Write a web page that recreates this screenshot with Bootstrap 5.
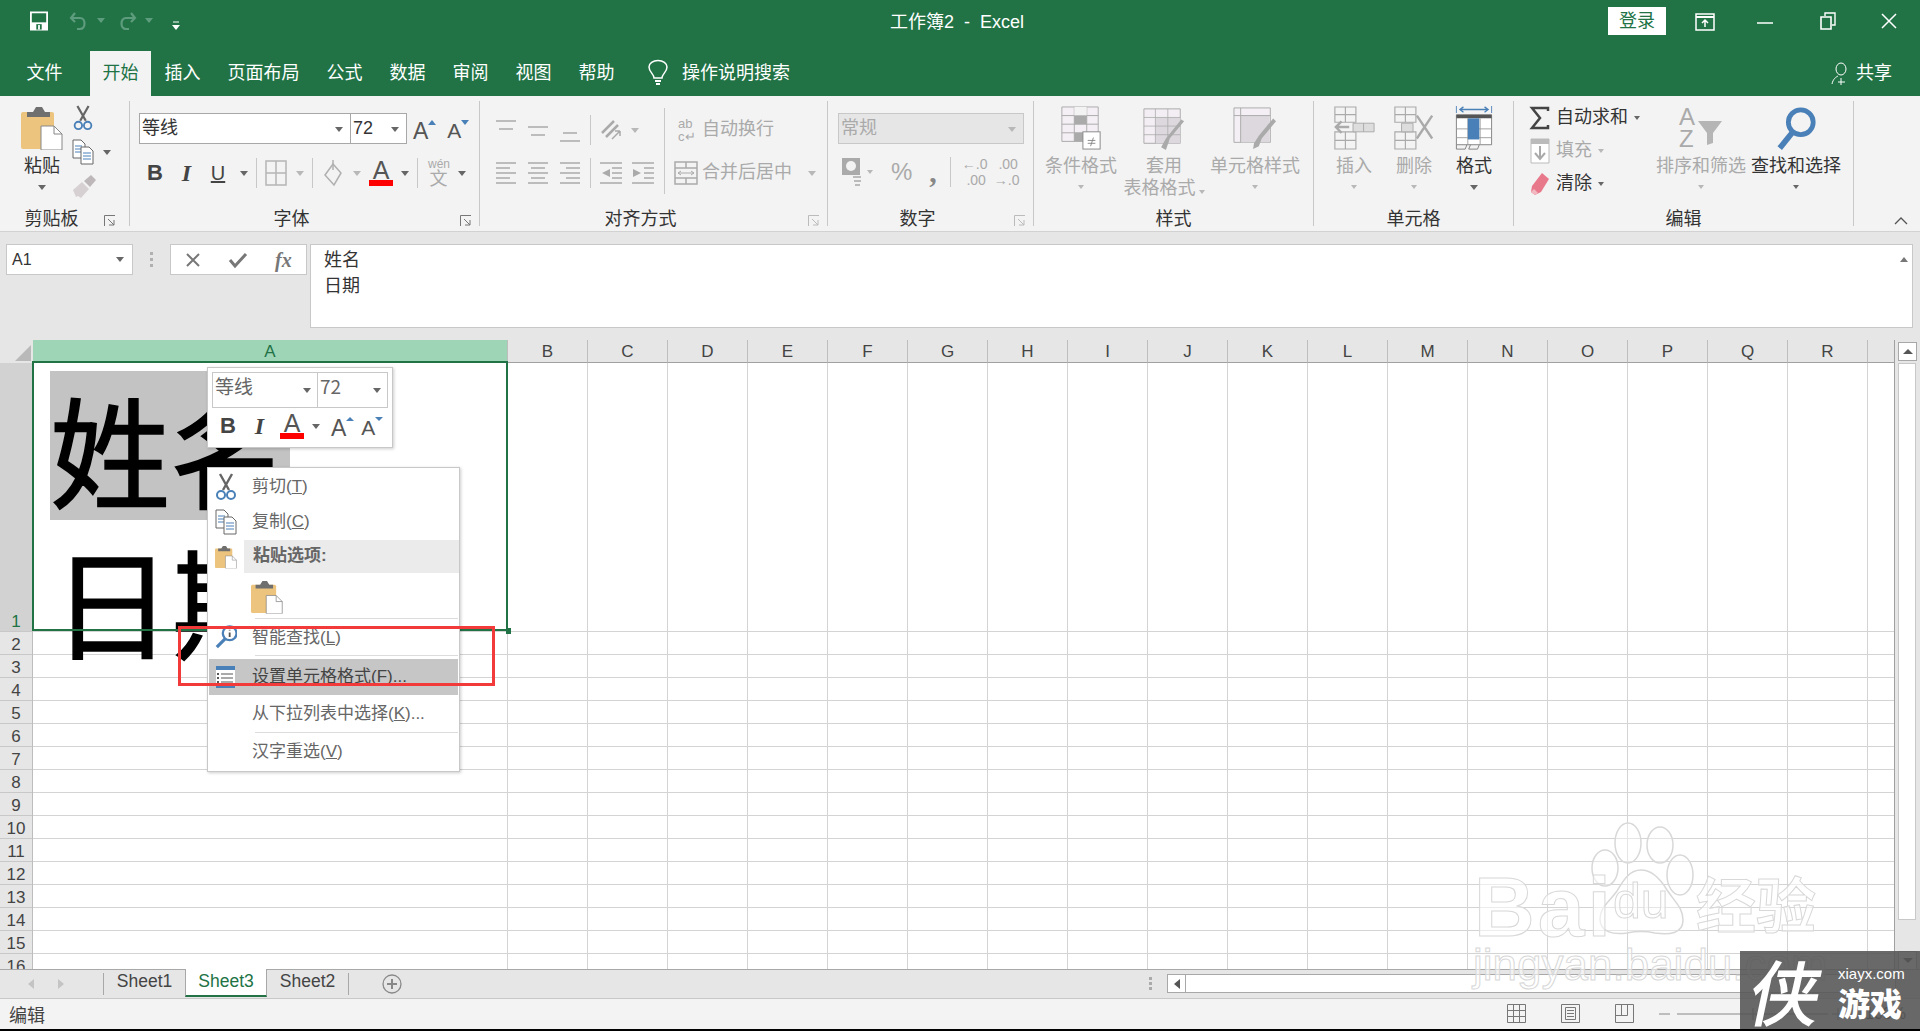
<!DOCTYPE html>
<html lang="zh">
<head>
<meta charset="utf-8">
<title>工作簿2 - Excel</title>
<link href="https://cdn.jsdelivr.net/npm/bootstrap@5.3.0/dist/css/bootstrap.min.css" rel="stylesheet">
<style>
html,body{height:100%;overflow:hidden}
body{font-family:"Liberation Sans","Noto Sans CJK SC",sans-serif;font-size:18px;color:#444;background:#000;line-height:1.2}
.xl-app{position:relative;width:1920px;height:1029px;overflow:hidden;background:#f3f3f3}
.ic{flex:none;display:block;overflow:visible}
.sl2{margin-left:2px}.sl3{margin-left:3px}.sl4{margin-left:4px}.sl5{margin-left:5px}.sl6{margin-left:6px}.sl7{margin-left:7px}.sl8{margin-left:8px}.sl9{margin-left:9px}.sl10{margin-left:10px}.sl11{margin-left:11px}.sl12{margin-left:12px}.sl13{margin-left:13px}.sl14{margin-left:14px}.sl16{margin-left:16px}.sl17{margin-left:17px}.sl18{margin-left:18px}.sl19{margin-left:19px}.sl21{margin-left:21px}.sl24{margin-left:24px}
.tri{flex:none;width:0;height:0;border-left:4px solid transparent;border-right:4px solid transparent;border-top:5px solid #666}
.tri.off{border-top-color:#b8b8b8}
.tri.sm{border-left-width:3px;border-right-width:3px;border-top-width:4px}
.tri.qt{border-top-color:#5d9c7d;margin-top:7px}
/* title */
.xl-title{height:51px;background:#217346;color:#fff;position:relative}
.xl-title .qat{padding-left:30px;padding-top:11px}
.qat-more{margin-top:10px}
.xl-doc{position:absolute;left:890px;top:11px;white-space:nowrap;line-height:22px}
.xl-login{width:58px;height:28px;margin-top:7px;background:#fff;color:#217346;font-size:18px;line-height:29px;text-align:center}
#rdo{margin:13px 0 0 29px}#wmin{margin:22px 0 0 42px}#wres{margin:12px 0 0 47px}#wcls{margin:13px 23px 0 45px}
.xl-tabs{height:45px;background:#217346;color:#fff;padding-left:13px}
.xl-tab{padding:0 13.5px;line-height:45px;height:45px}
.xl-tab.on{background:#f3f3f3;color:#217346;margin-left:14px;padding:0 12.5px}
.xl-tell{margin-left:20px}
#shr{margin-right:28px}
/* ribbon */
.xl-ribbon{height:136px;padding-top:5px;background:#f3f3f3;border-bottom:1px solid #d2d2d2;position:relative}
.rg{height:125px;flex:none;border-right:1px solid #c8c8c8;display:flex;flex-direction:column}
.rg-a{width:130px}.rg-b{width:350px}.rg-c{width:348px}.rg-d{width:206px}.rg-e{width:280px}.rg-f{width:200px}.rg-g{width:340px}
.rg-body{height:105px;flex:none;display:flex}
.rg-label{height:20px;display:flex;color:#333;line-height:26px;font-size:18px}
.rg-name{flex:1 1 auto;text-align:center}
.rg-name.lnch{padding-right:26px}
.launch{position:relative}
.launcher{flex:none;width:12px;height:12px;margin:9px 7px 0 0;position:absolute;right:0}
.rg-a .launcher{right:6px}
.bigb{flex:none;display:flex;flex-direction:column;align-items:center;color:#333;white-space:nowrap;line-height:22px;padding-top:5px}
.bigb .ic{height:44px}
.bigb.off{color:#aaa}
.bigb .lbl{margin-top:5px;height:22px}
.bigb .tri{margin-top:8px}
.bigb .two{margin-top:1px;display:flex;align-items:center;gap:3px;height:20px}
.w42{width:42px}.w78{width:78px}.w88{width:88px}.w94{width:94px}.w60{width:60px}.w90{width:90px}
.cb-small{padding-top:4px;display:flex;flex-direction:column;gap:8px}
.combo{display:flex;align-items:center;height:31px;background:#fff;border:1px solid #a8a8a8;position:relative;padding-left:2px;color:#333;flex:none}
.combo .tri{position:absolute;right:7px;top:13px}
.c-font{width:212px}.c-size{width:57px;margin-left:-1px}
.row1{margin-top:12px;align-items:center;height:31px}
.row2{margin-top:14px;align-items:center;height:30px}
.fmt{flex:none;text-align:center;color:#444;line-height:26px}
.fb{width:15px;font-weight:700;font-size:22px}.fi{width:13px;font-style:italic;font-family:"Liberation Serif",serif;font-size:24px;font-weight:700}.fu{width:16px;font-size:20px;text-decoration:underline}
.vsep{flex:none;width:1px;height:30px;background:#c8c8c8}
.vsep.tall{height:86px;margin-top:7px}
.aa{font-size:23px;line-height:32px;padding-top:4px;color:#555;flex:none}
.aa2{font-size:21px;line-height:32px;padding-top:4px;color:#555;flex:none}
.fc{flex:none;width:24px;display:flex;flex-direction:column;align-items:center;color:#555}
.fc b{font-weight:400;font-size:25px;line-height:20px;height:20px}
.fc i{display:block;width:24px;height:6px;background:#f00}
.off-t{color:#aaa;white-space:nowrap}
.wen{flex:none;width:21px;text-align:center;color:#aaa;font-size:12px;line-height:12px}
.wen span{display:block;font-size:18px;line-height:18px}
.al1{margin-top:14px;height:30px;align-items:center}
.al2{margin-top:13px;height:30px;align-items:center}
#alL{width:184px}
.ab{flex:none;width:18px;color:#aaa;font-size:13px;line-height:13px}
.c-num{width:186px;margin-left:10px;background:#e6e6e6;border-color:#c8c8c8;color:#aaa}
.nrow{margin-top:14px;height:28px;align-items:center}
.pct{flex:none;font-size:24px;color:#aaa}
.cmm{flex:none;font-size:30px;font-weight:700;color:#888;line-height:20px;font-family:"Liberation Serif",serif}
.dec{flex:none;font-size:14px;line-height:16px;color:#aaa;width:24px;text-align:right}
.ed-left{width:126px;flex:none;margin-left:16px;display:flex;flex-direction:column}
.ed-row{display:flex;align-items:center;height:33px;white-space:nowrap;color:#333}
.ed-row.off{color:#aaa}
.ed-row span{margin-left:6px}
.az{color:#aaa;font-size:24px;line-height:22px;width:18px}
.sort-ic{display:flex;height:44px;align-items:flex-start}
.collapse-arrow{position:absolute;left:1894px;top:120px}
/* formula */
.xl-formula{height:108px;background:#e6e6e6;padding-top:12px;display:flex;align-items:flex-start;flex:none}
.namebox{width:127px;height:31px;margin-left:6px;background:#fff;border:1px solid #c8c8c8;display:flex;align-items:center;justify-content:space-between;padding:0 8px 0 5px;font-size:16px;color:#333}
.dots{margin-left:17px;width:4px;height:31px;display:flex;flex-direction:column;gap:3px;justify-content:center}
.dots i{display:block;width:3px;height:3px;background:#b0b0b0}
.fxbox{width:137px;height:31px;margin-left:16px;background:#fff;border:1px solid #c8c8c8;display:flex;align-items:center;padding-left:14px;gap:28px}
.fxtxt{font-family:"Liberation Serif",serif;font-style:italic;font-weight:700;font-size:20px;color:#777;line-height:20px}
.finput{width:1603px;height:84px;margin-left:3px;background:#fff;border:1px solid #c8c8c8;padding:2px 13px;line-height:26px;color:#333;position:relative}
.finput .tri-up{position:absolute;right:4px;top:12px;width:0;height:0;border-left:4px solid transparent;border-right:4px solid transparent;border-bottom:5px solid #777}
/* grid */
.colhead{height:23px;display:flex;background:#e6e6e6;flex:none;position:relative}
.corner{width:33px;flex:none;position:relative}
.corner svg{position:absolute;left:15px;top:5px}
.ch{width:80px;flex:none;text-align:center;font-size:17px;line-height:24px;border-right:1px solid #bdbdbd;color:#444;border-bottom:1px solid #a0a0a0}
.ch.a{width:475px;background:#9fd5b7;color:#217346;border-bottom:0}
.ch-rest{width:27px;flex:none;border-bottom:1px solid #a0a0a0;border-right:1px solid #a0a0a0}
.ch-end{flex:1 1 auto;padding:2px 0 0 3px}
.gridwrap{height:606px;display:flex;overflow:hidden;background:#fff;flex:none}
.rowheads{width:33px;flex:none;background:#e6e6e6;border-right:1px solid #bdbdbd}
.rh{height:23px;text-align:center;font-size:17px;line-height:25px;border-bottom:1px solid #c8c8c8;color:#444}
.rh.one{height:269px;background:#d2d2d2;color:#217346;display:flex;align-items:flex-end;justify-content:center;line-height:18px}
.col-a{width:475px;flex:none;border-right:1px solid #d4d4d4;display:flex;flex-direction:column}
.col-r{width:1387px;flex:none;display:flex;flex-direction:column;background-image:linear-gradient(90deg,transparent 79px,#d4d4d4 79px);background-size:80px 100%;border-right:1px solid #a0a0a0}
.r1{height:268px;flex:none}
.rn{flex:1 1 auto;background-image:linear-gradient(180deg,#d4d4d4 1px,transparent 1px);background-size:100% 23px}
.vscroll{flex:1 1 auto;background:#e6e6e6;display:flex;flex-direction:column;padding-left:3px}
.vs-btn{height:19px;width:19px;background:#fff;border:1px solid #a8a8a8;flex:none;display:flex;align-items:center;justify-content:center}
.vs-thumb{height:557px;width:18px;background:#fff;border:1px solid #c8c8c8;flex:none}
.vs-gap{height:31px;flex:none}
.tri-up2{width:0;height:0;border-left:5px solid transparent;border-right:5px solid transparent;border-bottom:5px solid #555}
.tri-dn2{width:0;height:0;border-left:5px solid transparent;border-right:5px solid transparent;border-top:5px solid #555}
/* sheets */
.sheetbar{height:30px;background:#e6e6e6;border-top:1px solid #a8a8a8;border-bottom:1px solid #c8c8c8;display:flex;flex:none;position:relative}
.navarr{padding-left:28px;height:28px;align-items:center;width:103px;flex:none}
.stab{width:81px;height:27px;text-align:center;font-size:17.5px;line-height:22px;color:#444;flex:none}
.stab.cur{background:#fff;color:#217346;border-bottom:2px solid #217346;border-left:1px solid #a8a8a8;border-right:1px solid #a8a8a8;margin-top:-1px;height:28px;padding-top:1px;width:82px}
.shsep{width:1px;height:22px;margin-top:3px;background:#a8a8a8;flex:none}
.addsheet{margin-left:33px;margin-top:4px}
.sbtrack{position:absolute;left:1167px;top:4px;width:729px;height:19px;display:flex;align-items:stretch}
.sb-l{width:19px;background:#fff;border:1px solid #a8a8a8;display:flex;align-items:center;justify-content:center;flex:none}
.sb-th{flex:1 1 auto;background:#fff;border:1px solid #a8a8a8;border-left:0}
.tdots{position:absolute;left:1149px;top:7px;width:3px;display:flex;flex-direction:column;gap:2px}
.tdots i{display:block;width:3px;height:3px;background:#aaa}
.statusbar{height:30px;background:#f3f3f3;padding-left:9px;padding-top:3px;line-height:24px;color:#444;display:flex;align-items:center;flex:none;position:relative}
.vw{position:absolute;top:5px}
.v1{left:1507px}.v2{left:1561px}.v3{left:1615px}.v4{left:1659px;top:5px}
.pct100{position:absolute;left:1865px;top:3px;font-size:16px}
/* overlays */
.sel-box{position:absolute;left:32px;top:361px;width:476px;height:270px;border:2px solid #217346;pointer-events:none}
.sel-h{position:absolute;left:506px;top:628px;width:5px;height:6px;background:#217346}
.bigtxt{position:absolute;left:50px;top:371px;font-family:"Noto Sans CJK SC",sans-serif;font-size:120px;color:#000;white-space:nowrap;-webkit-text-stroke:1.5px #000}
.bigtxt .hl{display:block;width:240px;height:149px;line-height:155px;background:#c3c3c3}
.bigtxt .l2{display:block;height:149px;line-height:159px;padding-left:2px}
.minibar{position:absolute;left:207px;top:367px;width:186px;height:81px;background:#fff;border:1px solid #c8c8c8;box-shadow:1px 1px 3px rgba(0,0,0,.2);padding:4px}
.mb-top{display:flex;height:36px}
.mb-f{width:106px;height:36px;border:1px solid #c8c8c8;display:flex;align-items:center;padding-left:2px;padding-bottom:8px;position:relative;font-size:19px;color:#666;font-family:"Noto Sans CJK SC",sans-serif}
.mb-s{width:71px;margin-left:-1px}
.mb-f .tri{position:absolute;right:6px;top:15px}
.mb-row{height:36px;align-items:center;color:#555}
.ctx{position:absolute;left:207px;top:467px;width:253px;height:305px;background:#fff;border:1px solid #c8c8c8;box-shadow:1px 1px 3px rgba(0,0,0,.2);padding-top:2px;color:#666;font-size:17px}
.ci{display:flex;align-items:center;padding-left:7px;white-space:nowrap}
.ci .ii{flex:none;width:22px}
.ci .tt{margin-left:15px}
.h34{height:34px}.h36{height:36px}
.ci.low .tt{padding-top:3px}
.ci u{text-decoration:underline}
.ci.hdr{height:33px}
.ci.hdr b{display:flex;align-items:center;height:33px;width:215px;background:#ebebeb;padding-left:9px;color:#666}
.ci.hov{margin:3px 1px 1px;padding-left:6px;background:#c6c6c6;color:#444;height:36px}
.csep{height:1px;background:#dcdcdc;margin:0 1px 0 47px}
.pasterow{height:45px;padding:7px 0 0 43px}
.redbox{position:absolute;left:178px;top:626px;width:317px;height:60px;border:3px solid #f33a3a;pointer-events:none}
.bd-logo{position:absolute;left:1470px;top:822px;width:350px;height:175px;pointer-events:none}
.bd-t{position:absolute;font-family:"Liberation Sans",sans-serif;font-weight:700;color:rgba(255,255,255,.55);-webkit-text-stroke:1px #d8d8d8;white-space:nowrap;line-height:1}
.bd-bai{left:4px;top:43px;font-size:84px;letter-spacing:3px}
.bd-du{left:143px;top:54px;font-size:50px;font-weight:400}
.bd-jy{left:226px;top:50px;font-size:60px;font-family:"Noto Sans CJK SC",sans-serif}
.bd-url{left:3px;top:121px;font-size:44px;font-weight:400}
.xia{position:absolute;left:1740px;top:951px;width:180px;height:80px;background:rgba(84,84,84,.88);color:#fff;overflow:hidden}
.xia-b{position:absolute;left:12px;top:2px;font-family:"Noto Sans CJK SC",sans-serif;font-weight:400;-webkit-text-stroke:1.5px #fff;font-size:70px;line-height:74px;transform:skewX(-12deg)}
.xia-u{position:absolute;left:98px;top:15px;font-size:15px;line-height:16px}
.xia-g{position:absolute;left:98px;top:33px;font-family:"Noto Sans CJK SC",sans-serif;font-weight:900;font-size:32px;line-height:36px;white-space:nowrap}
</style>
</head>
<body>
<svg width="0" height="0" class="position-absolute">
<defs>
<symbol id="paste" viewBox="0 0 42 44"><rect x="0" y="6" width="33" height="37" rx="2" fill="#edc47d"/><path d="M6 6h6l3-5h6l3 5h5v5H6z" fill="#6f6f6f"/><path d="M20 20h13l8 8v16H20z" fill="#fff" stroke="#888"/><path d="M33 20v8h8" fill="none" stroke="#888"/></symbol>
<symbol id="sciss" viewBox="0 0 22 28"><path d="M5 1l9 16M17 1L8 17" stroke="#666" stroke-width="2.4" fill="none"/><circle cx="6" cy="22" r="4" fill="none" stroke="#4a80b8" stroke-width="2"/><circle cx="16" cy="22" r="4" fill="none" stroke="#4a80b8" stroke-width="2"/></symbol>
<symbol id="copy" viewBox="0 0 22 26"><path d="M1 1h8l4 4v14H1z" fill="#fff" stroke="#666"/><path d="M3 7h7M3 10h7M3 13h7" stroke="#4a80b8"/><path d="M9 8h8l4 4v13H9z" fill="#fff" stroke="#666"/><path d="M11 14h8M11 17h8M11 20h8" stroke="#4a80b8"/></symbol>
<symbol id="brush" viewBox="0 0 26 26"><path d="M1 17l9-8 7 7-8 9-3-2-2 1z" fill="#d6d0d2"/><path d="M12 8l7-6 5 5-6 7z" fill="#bdb7b9"/></symbol>
</defs>
</svg>
<div class="xl-app d-flex flex-column">

<!-- title bar -->
<div class="xl-title d-flex flex-none">
  <div class="qat d-flex align-items-start">
    <svg class="ic" width="18" height="20" viewBox="0 0 20 21"><path d="M1 1h18v19H1z" fill="none" stroke="#fff" stroke-width="2"/><rect x="1" y="12" width="18" height="8" fill="#fff"/><rect x="7" y="14" width="6" height="6" fill="#217346"/><rect x="9" y="15" width="2" height="5" fill="#fff"/></svg>
    <svg class="ic sl19" width="22" height="21" viewBox="0 0 18 21"><path d="M6 2L2 7l4 4M2 7h9c6 0 6 11 0 11H8" fill="none" stroke="#5d9c7d" stroke-width="2.2"/></svg>
    <span class="tri qt sl8"></span>
    <svg class="ic sl12" width="22" height="21" viewBox="0 0 18 21"><path d="M12 2l4 5-4 4M16 7H7c-6 0-6 11 0 11h3" fill="none" stroke="#5d9c7d" stroke-width="2.2"/></svg>
    <span class="tri qt sl6"></span>
    <svg class="ic sl19 qat-more" width="8" height="9" viewBox="0 0 8 9"><path d="M1 1h6" stroke="#fff"/><path d="M0 4h8L4 9z" fill="#fff"/></svg>
  </div>
  <div class="xl-doc">工作簿2&nbsp; -&nbsp; Excel</div>
  <div class="ms-auto d-flex align-items-start">
    <div class="xl-login">登录</div>
    <svg class="ic" width="20" height="18" viewBox="0 0 20 18" id="rdo"><path d="M1 1h18v16H1z" fill="none" stroke="#fff" stroke-width="1.5"/><path d="M1 4h18" stroke="#fff" stroke-width="2"/><path d="M10 14V7M7 10l3-3 3 3" fill="none" stroke="#fff" stroke-width="1.5"/></svg>
    <svg class="ic" width="16" height="2" viewBox="0 0 16 2" id="wmin"><path d="M0 1h16" stroke="#fff" stroke-width="1.5"/></svg>
    <svg class="ic" width="16" height="18" viewBox="0 0 16 18" id="wres"><path d="M1 5h10v12H1z" fill="none" stroke="#fff" stroke-width="1.6"/><path d="M5 4V1h10v12h-3" fill="none" stroke="#fff" stroke-width="1.4"/></svg>
    <svg class="ic" width="16" height="16" viewBox="0 0 16 16" id="wcls"><path d="M1 1l14 14M15 1L1 15" stroke="#fff" stroke-width="1.5"/></svg>
  </div>
</div>
<div class="xl-tabs d-flex align-items-stretch flex-none">
  <div class="xl-tab">文件</div>
  <div class="xl-tab on">开始</div>
  <div class="xl-tab">插入</div>
  <div class="xl-tab">页面布局</div>
  <div class="xl-tab">公式</div>
  <div class="xl-tab">数据</div>
  <div class="xl-tab">审阅</div>
  <div class="xl-tab">视图</div>
  <div class="xl-tab">帮助</div>
  <div class="xl-tell d-flex align-items-center">
    <svg class="ic" width="20" height="27" viewBox="0 0 20 27"><path d="M6 18c0-4-5-6-5-11a9 6.500 0 0 1 18 0c0 5-5 7-5 11z" fill="none" stroke="#fff" stroke-width="1.5"/><path d="M7 21h6M8 24h4" stroke="#fff" stroke-width="2"/></svg>
    <span class="sl14">操作说明搜索</span>
  </div>
  <div class="ms-auto d-flex align-items-center" id="shr">
    <svg class="ic" width="20" height="24" viewBox="0 0 20 24"><ellipse cx="10" cy="7" rx="5" ry="6" fill="none" stroke="#fff"/><path d="M1 22c1-5 4-7 6-8M10 23v-7M7 20h7" fill="none" stroke="#fff"/></svg>
    <span class="sl5">共享</span>
  </div>
</div>

<!-- ribbon -->
<div class="xl-ribbon d-flex flex-none">
  <div class="rg rg-a">
    <div class="rg-body">
      <div class="bigb w42 sl21"><svg class="ic" width="42" height="44"><use href="#paste"/></svg><span class="lbl">粘贴</span><span class="tri"></span></div>
      <div class="cb-small sl9">
        <svg class="ic" width="22" height="26"><use href="#sciss"/></svg>
        <div class="d-flex align-items-center"><svg class="ic" width="22" height="26"><use href="#copy"/></svg><span class="tri sl9"></span></div>
        <svg class="ic" width="26" height="26"><use href="#brush"/></svg>
      </div>
    </div>
    <div class="rg-label launch"><span class="rg-name lnch">剪贴板</span><svg class="launcher" viewBox="0 0 12 12"><path d="M.5 11V.5H11M4 4l6 6M10 5v5H5" fill="none" stroke="#777"/></svg></div>
  </div>

  <div class="rg rg-b">
    <div class="rg-body d-block">
      <div class="d-flex row1 sl9">
        <div class="combo c-font">等线<span class="tri"></span></div>
        <div class="combo c-size">72<span class="tri"></span></div>
        <span class="aa sl6">A</span>
        <svg class="ic" width="8" height="20" viewBox="0 0 8 20"><path d="M0 6l4-5 4 5z" fill="#4a80b8"/></svg>
        <span class="aa2 sl11">A</span>
        <svg class="ic" width="8" height="20" viewBox="0 0 8 20"><path d="M0 1l4 5 4-5z" fill="#4a80b8"/></svg>
      </div>
      <div class="d-flex row2">
        <span class="fmt fb sl17">B</span>
        <span class="fmt fi sl18">I</span>
        <span class="fmt fu sl17">U</span>
        <span class="tri sl14"></span>
        <span class="vsep sl8"></span>
        <svg class="ic sl8" width="22" height="26" viewBox="0 0 22 26"><path d="M1 1h20v24H1zM11 1v24M1 13h20" fill="none" stroke="#b5b5b5" stroke-width="1.5"/></svg>
        <span class="tri off sl9"></span>
        <span class="vsep sl8"></span>
        <svg class="ic sl10" width="22" height="28" viewBox="0 0 22 28"><path d="M10 5L2 16l9 10 7-12z" fill="none" stroke="#b0b0b0" stroke-width="1.5"/><path d="M10 1v10" stroke="#b0b0b0" stroke-width="1.500"/></svg>
        <span class="tri off sl8"></span>
        <div class="fc sl8"><b>A</b><i></i></div>
        <span class="tri sl8"></span>
        <span class="vsep sl8"></span>
        <div class="wen sl10">wén<span>文</span></div>
        <span class="tri sl9"></span>
      </div>
    </div>
    <div class="rg-label launch"><span class="rg-name lnch">字体</span><svg class="launcher" viewBox="0 0 12 12"><path d="M.5 11V.5H11M4 4l6 6M10 5v5H5" fill="none" stroke="#777"/></svg></div>
  </div>

  <div class="rg rg-c">
    <div class="rg-body">
      <div class="flex-none" id="alL">
        <div class="d-flex al1">
          <svg class="ic sl16" width="20" height="24" viewBox="0 0 20 24"><path d="M0 3h20M3 11h14" stroke="#aaa" stroke-width="1.5"/></svg>
          <svg class="ic sl12" width="20" height="24" viewBox="0 0 20 24"><path d="M0 9h20M3 17h14" stroke="#aaa" stroke-width="1.5"/></svg>
          <svg class="ic sl12" width="20" height="24" viewBox="0 0 20 24"><path d="M3 15h14M0 23h20" stroke="#aaa" stroke-width="1.5"/></svg>
          <span class="vsep sl10"></span>
          <svg class="ic sl9" width="22" height="26" viewBox="0 0 22 26"><path d="M2 16L14 4M6 20L18 8" stroke="#aaa" stroke-width="2.500"/><path d="M12 22l8-8m0 0h-5m5 0v5" stroke="#aaa" fill="none" stroke-width="1.500"/></svg>
          <span class="tri off sl9"></span>
        </div>
        <div class="d-flex al2">
          <svg class="ic sl16" width="20" height="24" viewBox="0 0 20 24"><path d="M0 2h20M0 7h14M0 12h20M0 17h14M0 22h20" stroke="#aaa" stroke-width="1.500"/></svg>
          <svg class="ic sl12" width="20" height="24" viewBox="0 0 20 24"><path d="M0 2h20M3 7h14M0 12h20M3 17h14M0 22h20" stroke="#aaa" stroke-width="1.500"/></svg>
          <svg class="ic sl12" width="20" height="24" viewBox="0 0 20 24"><path d="M0 2h20M6 7h14M0 12h20M6 17h14M0 22h20" stroke="#aaa" stroke-width="1.500"/></svg>
          <span class="vsep sl10"></span>
          <svg class="ic sl9" width="22" height="24" viewBox="0 0 22 24"><path d="M0 2h22M12 7h10M12 12h10M12 17h10M0 22h22" stroke="#aaa" stroke-width="1.500"/><path d="M10 8v8L2 12z" fill="#aaa"/></svg>
          <svg class="ic sl10" width="22" height="24" viewBox="0 0 22 24"><path d="M0 2h22M12 7h10M12 12h10M12 17h10M0 22h22" stroke="#aaa" stroke-width="1.500"/><path d="M1 8v8l8-4z" fill="#aaa"/></svg>
        </div>
      </div>
      <span class="vsep tall"></span>
      <div class="flex-none">
        <div class="d-flex al1">
          <div class="ab sl13">ab<br>c↵</div>
          <span class="off-t sl6">自动换行</span>
        </div>
        <div class="d-flex al2">
          <svg class="ic sl9" width="24" height="24" viewBox="0 0 24 24"><path d="M1 1h22v22H1zM1 7h22M1 17h22M12 1v6M12 17v6" fill="none" stroke="#aaa" stroke-width="1.500"/><path d="M4 12h16M7 10l-3 2 3 2M17 10l3 2-3 2" fill="none" stroke="#aaa"/></svg>
          <span class="off-t sl4">合并后居中</span>
          <span class="tri off sl16"></span>
        </div>
      </div>
    </div>
    <div class="rg-label launch"><span class="rg-name lnch">对齐方式</span><svg class="launcher" viewBox="0 0 12 12"><path d="M.5 11V.5H11M4 4l6 6M10 5v5H5" fill="none" stroke="#bbb"/></svg></div>
  </div>

  <div class="rg rg-d">
    <div class="rg-body d-block">
      <div class="d-flex row1">
        <div class="combo c-num">常规<span class="tri off"></span></div>
      </div>
      <div class="d-flex nrow">
        <svg class="ic sl13" width="22" height="30" viewBox="0 0 22 30"><rect x="1" y="1" width="18" height="17" fill="#aaa"/><circle cx="10" cy="9" r="5" fill="#f3f3f3"/><path d="M12 20h8M13 24h7M14 28h5" stroke="#bbb" stroke-width="2"/></svg>
        <span class="tri off sm sl4"></span>
        <span class="pct sl18">%</span>
        <span class="cmm sl17">,</span>
        <span class="vsep sl13"></span>
        <div class="dec sl11">←.0<br>.00</div>
        <div class="dec sl8">.00<br>→.0</div>
      </div>
    </div>
    <div class="rg-label launch"><span class="rg-name lnch">数字</span><svg class="launcher" viewBox="0 0 12 12"><path d="M.5 11V.5H11M4 4l6 6M10 5v5H5" fill="none" stroke="#bbb"/></svg></div>
  </div>

  <div class="rg rg-e">
    <div class="rg-body">
      <div class="bigb off w78 sl8">
        <svg class="ic" width="42" height="46" viewBox="0 0 42 46"><path d="M1 1h38v36H1z" fill="#f4eff4" stroke="#aaa"/><path d="M14 1v36M27 1v36M1 10h38M1 19h38M1 28h38" stroke="#aaa"/><path d="M14 1h13v9H14z" fill="#f3f3f3"/><path d="M14 10h13v9H14zM14 28h13v9H14z" fill="#aaa"/><rect x="23" y="27" width="18" height="18" fill="#fff" stroke="#888"/><path d="M28 36h8M28 39h8M31 42l3-9" stroke="#888"/></svg>
        <span class="lbl">条件格式</span><span class="tri off sm"></span>
      </div>
      <div class="bigb off w88">
        <svg class="ic" width="44" height="46" viewBox="0 0 44 46"><path d="M1 3h38v36H1z" fill="#f3eef3" stroke="#aaa"/><path d="M13 12h26v27H13z" fill="#ddd8dd"/><path d="M13 3v36M26 3v36M1 12h38M1 21h38M1 30h38" stroke="#aaa" stroke-width=".8"/><path d="M43 16L28 34l-3 9-1 3-5-3 5-9 16-20z" fill="#aaa"/></svg>
        <span class="lbl">套用</span>
        <span class="two">表格格式<span class="tri off sm"></span></span>
      </div>
      <div class="bigb off w94">
        <svg class="ic" width="46" height="46" viewBox="0 0 46 46"><path d="M1 2h38v36H1z" fill="#f4eff4" stroke="#aaa"/><path d="M8 10h30v28H8z" fill="#ddd8dd"/><path d="M1 10h38M8 2v36" stroke="#aaa"/><path d="M45 16L30 34l-3 8-6 3 1-6 5-8 15-18z" fill="#aaa"/></svg>
        <span class="lbl">单元格样式</span><span class="tri off sm"></span>
      </div>
    </div>
    <div class="rg-label"><span class="rg-name">样式</span></div>
  </div>

  <div class="rg rg-f">
    <div class="rg-body">
      <div class="bigb off w60 sl10">
        <svg class="ic" width="42" height="46" viewBox="0 0 42 46"><path d="M1 1h22v16H1zM1 27h22v18H1zM12 1v16M1 9h22M12 27v18M1 36h22" fill="none" stroke="#aaa" stroke-width="1.200"/><path d="M20 18H42v9H20z" fill="#ddd" stroke="#aaa"/><path d="M31 18v9" stroke="#aaa"/><path d="M8 16l-6 6 6 6M2 22h14" fill="none" stroke="#aaa" stroke-width="2.500"/></svg>
        <span class="lbl">插入</span><span class="tri off sm"></span>
      </div>
      <div class="bigb off w60">
        <svg class="ic" width="42" height="46" viewBox="0 0 42 46"><path d="M1 1h22v16H1zM1 27h22v18H1zM12 1v16M1 9h22M12 27v18M1 36h22" fill="none" stroke="#aaa" stroke-width="1.200"/><path d="M8 18h12v9H8z" fill="#ddd" stroke="#aaa"/><path d="M24 10l16 24M40 10L24 34" stroke="#aaa" stroke-width="2.500"/></svg>
        <span class="lbl">删除</span><span class="tri off sm"></span>
      </div>
      <div class="bigb w60">
        <svg class="ic" width="42" height="50" viewBox="0 0 42 50"><path d="M1 0v8M41 0v8" stroke="#4a80b8"/><path d="M5 4h32M9 1L5 4l4 3M33 1l4 3-4 3" fill="none" stroke="#4a80b8" stroke-width="1.500"/><path d="M1 10h40v34H1z" fill="#fff" stroke="#777"/><path d="M1 10h40v4H1z" fill="#555"/><path d="M14 14v30M28 14v30M1 26h40M1 36h40" stroke="#999"/><path d="M14 14h13v24H14z" fill="#4a80b8"/><path d="M1 44v5h10l2-5M17 44l-2 5h10l2-5" fill="none" stroke="#777"/></svg>
        <span class="lbl">格式</span><span class="tri"></span>
      </div>
    </div>
    <div class="rg-label"><span class="rg-name">单元格</span></div>
  </div>

  <div class="rg rg-g">
    <div class="rg-body">
      <div class="ed-left">
        <div class="ed-row"><svg class="ic" width="20" height="24" viewBox="0 0 20 24"><path d="M18 5V2H2l8 10-8 10h16v-3" fill="none" stroke="#444" stroke-width="2.500"/></svg><span>自动求和</span><span class="tri sm sl14"></span></div>
        <div class="ed-row off"><svg class="ic" width="20" height="26" viewBox="0 0 20 26"><path d="M1 1h18v24H1z" fill="#fff" stroke="#bbb"/><path d="M1 1h18v5H1z" fill="#bbb"/><path d="M10 8v13M5 15l5 6 5-6" fill="none" stroke="#aaa" stroke-width="2"/></svg><span>填充</span><span class="tri off sm sl3"></span></div>
        <div class="ed-row"><svg class="ic" width="20" height="24" viewBox="0 0 20 24"><path d="M12 1l7 6-8 13-6 3-4-3 1-6z" fill="#e8798b"/><path d="M1 20l4 3 3-2-4-4z" fill="#f2b9c2"/></svg><span>清除</span><span class="tri sm sl3"></span></div>
      </div>
      <div class="bigb off w90">
        <div class="sort-ic"><span class="az">A<br>Z</span><svg class="ic" width="26" height="34" viewBox="0 0 26 34"><path d="M1 10h24l-9 12v10l-6 2V22z" fill="#b5b5b5"/></svg></div>
        <span class="lbl">排序和筛选</span><span class="tri off sm"></span>
      </div>
      <div class="bigb w90 sl5">
        <svg class="ic" width="44" height="46" viewBox="0 0 44 46"><circle cx="27" cy="17" r="13" fill="none" stroke="#4a80b8" stroke-width="5"/><path d="M18 28L5 44" stroke="#4a80b8" stroke-width="6"/></svg>
        <span class="lbl">查找和选择</span><span class="tri sm"></span>
      </div>
    </div>
    <div class="rg-label"><span class="rg-name">编辑</span></div>
  </div>
  <svg class="collapse-arrow" width="14" height="9" viewBox="0 0 14 9"><path d="M1 8l6-6 6 6" fill="none" stroke="#555" stroke-width="1.300"/></svg>
</div>

<!-- formula bar -->
<div class="xl-formula">
  <div class="namebox">A1<span class="tri"></span></div>
  <div class="dots"><i></i><i></i><i></i></div>
  <div class="fxbox">
    <svg class="ic" width="16" height="16" viewBox="0 0 16 16"><path d="M2 2l12 12M14 2L2 14" stroke="#777" stroke-width="2"/></svg>
    <svg class="ic" width="18" height="16" viewBox="0 0 18 16"><path d="M1 8l5 6L17 2" fill="none" stroke="#777" stroke-width="3"/></svg>
    <span class="fxtxt">fx</span>
  </div>
  <div class="finput">姓名<br>日期<span class="tri-up"></span></div>
</div>

<!-- column headers -->
<div class="colhead">
  <div class="corner"><svg width="16" height="16" viewBox="0 0 16 16"><path d="M16 0v16H0z" fill="#b9b9b9"/></svg></div>
  <div class="ch a">A</div><div class="ch">B</div><div class="ch">C</div><div class="ch">D</div><div class="ch">E</div><div class="ch">F</div><div class="ch">G</div><div class="ch">H</div><div class="ch">I</div><div class="ch">J</div><div class="ch">K</div><div class="ch">L</div><div class="ch">M</div><div class="ch">N</div><div class="ch">O</div><div class="ch">P</div><div class="ch">Q</div><div class="ch">R</div>
  <div class="ch-rest"></div>
  <div class="ch-end"><div class="vs-btn"><span class="tri-up2"></span></div></div>
</div>

<!-- cells -->
<div class="gridwrap">
  <div class="rowheads">
    <div class="rh one">1</div>
    <div class="rh">2</div><div class="rh">3</div><div class="rh">4</div><div class="rh">5</div><div class="rh">6</div><div class="rh">7</div><div class="rh">8</div><div class="rh">9</div><div class="rh">10</div><div class="rh">11</div><div class="rh">12</div><div class="rh">13</div><div class="rh">14</div><div class="rh">15</div><div class="rh">16</div>
  </div>
  <div class="col-a"><div class="r1"></div><div class="rn"></div></div>
  <div class="col-r"><div class="r1"></div><div class="rn"></div></div>
  <div class="vscroll">
    <div class="vs-thumb"></div>
    <div class="vs-gap"></div>
    <div class="vs-btn"><span class="tri-dn2"></span></div>
  </div>
</div>

<!-- sheet tabs -->
<div class="sheetbar">
  <div class="d-flex navarr">
    <svg class="ic" width="6" height="10" viewBox="0 0 6 10"><path d="M6 0v10L0 5z" fill="#c4c4c4"/></svg>
    <svg class="ic sl24" width="6" height="10" viewBox="0 0 6 10"><path d="M0 0v10l6-5z" fill="#c4c4c4"/></svg>
  </div>
  <span class="shsep"></span>
  <div class="stab">Sheet1</div>
  <div class="stab cur">Sheet3</div>
  <div class="stab">Sheet2</div>
  <span class="shsep"></span>
  <svg class="ic addsheet" width="20" height="20" viewBox="0 0 20 20"><circle cx="10" cy="10" r="9" fill="none" stroke="#888" stroke-width="1.300"/><path d="M5 10h10M10 5v10" stroke="#888" stroke-width="2"/></svg>
  <div class="tdots"><i></i><i></i><i></i></div>
  <div class="sbtrack"><div class="sb-l"><svg width="6" height="10" viewBox="0 0 6 10"><path d="M6 0v10L0 5z" fill="#555"/></svg></div><div class="sb-th"></div></div>
</div>

<!-- status bar -->
<div class="statusbar">编辑
  <svg class="vw v1" width="19" height="19" viewBox="0 0 19 19"><path d="M.5.5h18v18H.5zM6.500.5v18M12.500.5v18M.5 6.500h18M.5 12.500h18" fill="none" stroke="#777"/></svg>
  <svg class="vw v2" width="19" height="19" viewBox="0 0 19 19"><path d="M.5.5h18v18H.5zM4.500 3.500h10v12h-10zM6 6.500h7M6 9.500h7M6 12.500h7" fill="none" stroke="#777"/></svg>
  <svg class="vw v3" width="19" height="19" viewBox="0 0 19 19"><path d="M.5.5h18v18H.5zM.5 11.500h12V.5M6.500.5v11" fill="none" stroke="#777"/></svg>
  <svg class="vw v4" width="190" height="20" viewBox="0 0 190 20"><path d="M0 10h11M18 10h151M94 4v12M179 4v12M173 10h12" stroke="#888"/></svg>
  <span class="pct100">100%</span>
</div>

<!-- overlays on the sheet -->
<div class="bigtxt"><span class="hl">姓名</span><span class="l2">日期</span></div>
<div class="sel-box"></div><div class="sel-h"></div>

<div class="minibar">
  <div class="mb-top">
    <div class="mb-f">等线<span class="tri"></span></div>
    <div class="mb-f mb-s">72<span class="tri"></span></div>
  </div>
  <div class="d-flex mb-row">
    <span class="fmt fb sl8">B</span>
    <span class="fmt fi sl18">I</span>
    <div class="fc sl14"><b>A</b><i></i></div>
    <span class="tri sl8"></span>
    <span class="aa sl11">A</span>
    <svg class="ic" width="8" height="20" viewBox="0 0 8 20"><path d="M0 5l4-4 4 4z" fill="#4a80b8"/></svg>
    <span class="aa2 sl7">A</span>
    <svg class="ic" width="8" height="20" viewBox="0 0 8 20"><path d="M0 1l4 4 4-4z" fill="#4a80b8"/></svg>
  </div>
</div>

<div class="ctx">
  <div class="ci h34"><svg class="ii" width="22" height="28"><use href="#sciss"/></svg><span class="tt">剪切(<u>T</u>)</span></div>
  <div class="ci h36"><svg class="ii" width="22" height="26"><use href="#copy"/></svg><span class="tt">复制(<u>C</u>)</span></div>
  <div class="ci hdr"><svg class="ic" width="22" height="24" viewBox="0 0 42 44"><use href="#paste"/></svg><b class="sl7">粘贴选项:</b></div>
  <div class="pasterow"><svg class="ic" width="32" height="34" viewBox="0 0 42 44"><use href="#paste"/></svg></div>
  <div class="csep"></div>
  <div class="ci h36 low"><svg class="ii" width="22" height="26" viewBox="0 0 24 26"><circle cx="16" cy="9" r="7.500" fill="#fff" stroke="#4a80b8" stroke-width="2.500"/><path d="M11 15L2 24" stroke="#4a80b8" stroke-width="3.500"/><path d="M16 8v5M16 5v1" stroke="#555" stroke-width="2"/></svg><span class="tt">智能查找(<u>L</u>)</span></div>
  <div class="csep"></div>
  <div class="ci hov"><svg class="ii" width="22" height="22" viewBox="-1 0 22 22"><rect x="0" y="0" width="19" height="22" fill="#fff"/><rect x="0" y="0" width="19" height="4" fill="#4a80b8"/><rect x="0" y="20" width="19" height="2" fill="#4a80b8"/><path d="M5 8h12M5 12h12M5 16h12" stroke="#555"/><path d="M1 8h2M1 12h2M1 16h2" stroke="#555" stroke-width="2"/></svg><span class="tt">设置单元格格式(<u>F</u>)...</span></div>
  <div class="ci h36"><span class="ii"></span><span class="tt">从下拉列表中选择(<u>K</u>)...</span></div>
  <div class="csep"></div>
  <div class="ci h36 low"><span class="ii"></span><span class="tt">汉字重选(<u>V</u>)</span></div>
</div>

<div class="redbox"></div>

<div class="bd-logo">
  <svg class="position-absolute top-0 start-0" width="350" height="120" viewBox="0 0 350 120"><g fill="rgba(255,255,255,.4)" stroke="#d8d8d8" stroke-width="1.500"><ellipse cx="135" cy="46" rx="13" ry="18"/><ellipse cx="158" cy="21" rx="13" ry="20"/><ellipse cx="190" cy="23" rx="13" ry="18"/><ellipse cx="210" cy="53" rx="13" ry="20"/><path d="M171 48c12 0 20 10 26 20 8 12 16 18 16 30 0 14-14 15-28 13-10-2-18-2-28 0-14 2-27-1-27-14 0-12 10-18 17-28 6-10 12-21 24-21z"/></g></svg>
  <span class="bd-t bd-bai">Bai</span>
  <span class="bd-t bd-du">du</span>
  <span class="bd-t bd-jy">经验</span>
  <span class="bd-t bd-url">jingyan.baidu.com</span>
</div>

<div class="xia">
  <span class="xia-b">侠</span>
  <span class="xia-u">xiayx.com</span>
  <span class="xia-g">游戏</span>
</div>

</div>
</body>
</html>
